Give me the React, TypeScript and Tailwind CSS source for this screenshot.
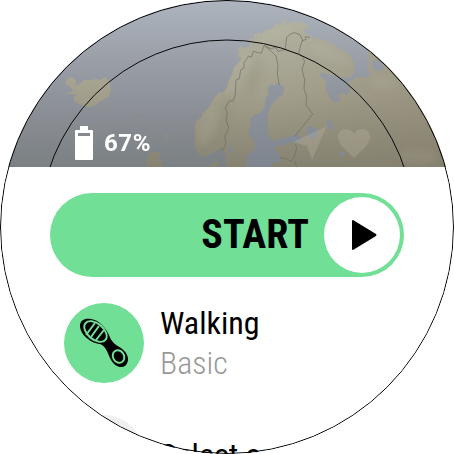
import React from "react";

const face = "font-['Roboto_Condensed','Roboto',sans-serif]";

const mainland =
  "M-4 446L-20 450L-42 462L-58 470L-74 466L-82 452L-90 432L-85 406L-89 386L-84 364L-68 352L-64 338L-50 328L-38 308L-28 292L-14 276L-6 280L8 264L14 242L24 222L28 204L38 192L48 184L52 172L38 168L46 158L40 150L50 138L62 144L76 138L78 124L74 118L86 116L94 100L106 96L114 102L122 92L144 86L150 76L162 70L164 78L174 64L188 56L184 72L192 76L200 64L206 70L214 60L224 72L234 64L246 72L256 80L238 92L244 100L258 106L272 116L286 114L304 122L330 134L356 150L374 162L388 182L392 204L388 222L374 234L346 232L322 226L300 220L288 218L290 230L308 242L304 262L312 284L322 302L336 308L350 304L344 286L356 280L370 286L378 272L378 258L368 248L386 240L402 230L418 230L430 236L438 224L432 202L436 182L430 150L440 140L520 140L680 300V501H8L4 470Z";
const iceland =
  "M-474 242L-464 230L-452 234L-444 242L-444 254L-450 260L-430 250L-424 242L-418 240L-400 240L-384 236L-372 240L-356 230L-350 240L-342 238L-344 250L-338 268L-346 290L-360 298L-374 306L-384 316L-404 322L-430 314L-448 306L-452 292L-440 284L-476 280L-452 274L-458 264L-476 252Z";

function MapBackdrop() {
  return (
    <svg
      className="absolute inset-0 h-full w-full"
      viewBox="0 0 454 167"
      preserveAspectRatio="xMidYMin slice"
      aria-hidden="true"
    >
      <defs>
        <linearGradient id="sea" x1="0" y1="0" x2="0" y2="1">
          <stop offset="0" stopColor="#adb4bd" />
          <stop offset="0.5" stopColor="#93979f" />
          <stop offset="1" stopColor="#7b8083" />
        </linearGradient>
        <linearGradient id="land" gradientUnits="userSpaceOnUse" x1="0" y1="50" x2="0" y2="501">
          <stop offset="0" stopColor="#b4b4a4" />
          <stop offset="0.5" stopColor="#a3a08d" />
          <stop offset="1" stopColor="#858271" />
        </linearGradient>
        <linearGradient id="water" gradientUnits="userSpaceOnUse" x1="0" y1="100" x2="0" y2="501">
          <stop offset="0" stopColor="#9ca1aa" />
          <stop offset="1" stopColor="#7f858e" />
        </linearGradient>
        <linearGradient id="east" gradientUnits="userSpaceOnUse" x1="150" y1="0" x2="640" y2="0">
          <stop offset="0" stopColor="#857a66" stopOpacity="0" />
          <stop offset="1" stopColor="#857a66" stopOpacity="0.3" />
        </linearGradient>
        <filter id="relief">
          <feGaussianBlur stdDeviation="10" />
        </filter>
        <clipPath id="coast">
          <path d={mainland} />
        </clipPath>
      </defs>
      <rect width="454" height="167" fill="url(#sea)" />
      <g transform="translate(224 0) scale(0.33333)">
        <g fill="url(#land)">
          <path d={iceland} />
          <path d={mainland} />
          <path d="M-222 462L-214 456L-190 456L-192 468L-200 474L-186 478L-184 492L-188 501H-234L-228 490L-238 484L-230 476Z" />
          <path d="M-176 405L-171 402L-169 411L-175 417Z M-252 358L-239 359L-247 363Z" />
          <path d="M-48 501L-34 490L-18 484L-14 492L-20 501Z" />
        </g>
        <path d={mainland} fill="url(#east)" />
        <g clipPath="url(#coast)">
          <g filter="url(#relief)" opacity="0.1">
            <g fill="#d6d3be">
              <ellipse cx="150" cy="105" rx="60" ry="16" transform="rotate(-20 150 105)" />
              <ellipse cx="40" cy="220" rx="22" ry="70" transform="rotate(28 40 220)" />
              <ellipse cx="-50" cy="380" rx="26" ry="60" transform="rotate(20 -50 380)" />
              <ellipse cx="320" cy="165" rx="70" ry="20" transform="rotate(24 320 165)" />
              <ellipse cx="480" cy="250" rx="40" ry="20" />
              <ellipse cx="580" cy="470" rx="60" ry="24" />
            </g>
            <g fill="#77755f">
              <ellipse cx="0" cy="350" rx="16" ry="60" transform="rotate(12 0 350)" />
              <ellipse cx="90" cy="230" rx="20" ry="60" transform="rotate(16 90 230)" />
            </g>
          </g>
        </g>
        <g fill="url(#water)">
          <path d="M130 264L140 252L150 256L160 248L172 254L182 264L176 284L158 298L144 314L134 334L130 356L132 378L130 398L138 414L150 422L176 414L202 408L222 404L236 414L226 426L200 428L178 436L156 438L150 448L164 462L172 478L164 492L150 484L140 501H64L70 480L66 466L82 458L94 444L92 424L80 414L72 394L80 374L78 356L94 344L108 338L122 322L124 296L134 282Z" />
          <path d="M248 382L256 376L266 382L280 386L284 400L276 414L262 418L250 406Z M306 362L316 360L326 374L330 388L322 392L310 378Z" />
          <path d="M446 184L458 178L474 190L484 202L470 212L452 210L444 200Z" />
          <path d="M346 458L354 454L362 460L358 468L348 470Z M12 448L20 438L28 442L22 456L14 458Z" />
        </g>
        <g fill="none" stroke="#6f6e65" strokeWidth="2.6" strokeLinejoin="round" opacity="0.8">
          <path d="M-12 448H-2L6 430L2 410L14 384L6 360L10 340L4 322L16 304L28 302L34 282L36 240L46 236L50 210L60 204L60 188L74 168L82 172L88 154L112 160L120 136L140 146L154 142L162 154L184 148L188 112L200 102L212 98L228 104L236 120L230 136L224 160L236 172L242 184L234 208L242 240L240 266L248 290L246 314L266 342L212 410" />
          <path d="M120 136L142 154L156 168L162 196L160 224L166 254M232 124L246 118L244 110L258 112" />
          <path d="M214 432L218 444L210 474L202 484L180 474L168 474M212 482L218 501" />
        </g>
        <g fill="#d0c9b7" opacity="0.22">
          <path d="M208 426L308 379L264 480L249 438Z" />
          <path d="M390 474C376 459 342 436 342 411C342 383 376 379 390 402C404 379 438 383 438 411C438 436 404 459 390 474Z" />
        </g>
      </g>
      <circle cx="227" cy="227" r="187" fill="none" stroke="#080808" />
    </svg>
  );
}

function Battery() {
  return (
    <svg className="h-[34px] w-[18px]" viewBox="0 0 18 34" fill="#fff" aria-hidden="true">
      <path
        fillRule="evenodd"
        d="M5 0h8v4h4q1 0 1 1v28q0 1-1 1H1q-1 0-1-1V5q0-1 1-1h4zM3 7v3h12V7z"
      />
    </svg>
  );
}

function ShoeSole() {
  return (
    <svg className="size-[80px]" viewBox="0 0 80 80" aria-hidden="true">
      <path
        d="M16 23C16 17 21 15 27 16C35 17 41 24 45 32C47 38 51 42 57 45C64 50 66 57 62 62C58 66 51 64 47 57C44 51 42 43 36 41C26 40 16 31 16 23Z"
        fill="#000"
      />
      <g transform="translate(31.5 28.5) rotate(40)">
        <ellipse rx="14" ry="9" fill="#71df96" />
        <ellipse rx="12" ry="7" fill="#000" />
      </g>
      <path d="M22 32L31 20M27 34L35 23M32 37L40 27" stroke="#71df96" strokeWidth="2" />
      <ellipse cx="54.5" cy="53.5" rx="5.5" ry="6.5" transform="rotate(-32 54.5 53.5)" fill="#000" stroke="#71df96" strokeWidth="2" />
    </svg>
  );
}

export default function App() {
  return (
    <main className={`relative mx-auto aspect-square w-full max-w-[454px] overflow-hidden rounded-full bg-white ${face}`}>
      <header className="relative flex h-[167px] items-end overflow-hidden pb-[7px] pl-[75px]">
        <MapBackdrop />
        <div className="relative flex items-center gap-[11px] text-white">
          <Battery />
          <span className="font-['Roboto',sans-serif] text-2xl leading-8 font-bold tracking-wide">67%</span>
        </div>
      </header>

      <section className="px-[50px] pt-[26px]">
        <button type="button" className="flex h-[84px] w-full items-center justify-end gap-[15px] rounded-full bg-[#71df96] pr-1 text-black">
          <span className="text-[40px] leading-[48px] font-bold">START</span>
          <span className="flex size-[76px] items-center justify-center rounded-full bg-white">
            <svg className="ml-1 h-[30px] w-[25px]" viewBox="0 0 25 30" aria-hidden="true">
              <path d="M1 0L24 14Q25 15 24 16L1 30Q0 30 0 29V1Q0 0 1 0Z" />
            </svg>
          </span>
        </button>

        <ul className="mt-[26px] flex flex-col gap-8 pl-[14px]">
          <li>
            <button type="button" className="flex w-full items-center gap-4 text-left">
              <span className="size-[80px] shrink-0 rounded-full bg-[#71df96]">
                <ShoeSole />
              </span>
              <span className="flex flex-col text-[32px] leading-10">
                <span className="text-black">Walking</span>
                <span className="font-light text-[#999]">Basic</span>
              </span>
            </button>
          </li>
          <li>
            <button type="button" className="flex w-full items-center gap-4 text-left">
              <span className="size-[80px] shrink-0 rounded-full bg-[#f0f0f0]" />
              <span className="text-[32px] leading-10 whitespace-nowrap text-black">Select a</span>
            </button>
          </li>
        </ul>
      </section>
      <div className="pointer-events-none absolute inset-0 rounded-full border border-black" />
    </main>
  );
}
